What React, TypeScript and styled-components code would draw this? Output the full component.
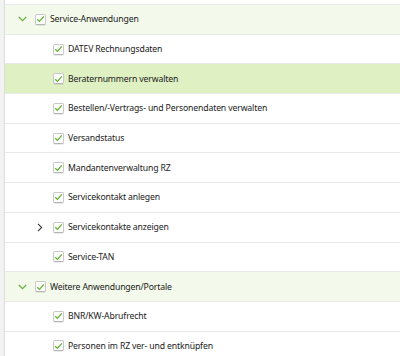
import React from 'react';
import styled, { createGlobalStyle } from 'styled-components';

const GlobalStyle = createGlobalStyle`
    html, body {
        margin: 0;
        padding: 0;
        background: #fff;
    }
    body {
        font-family: "Noto Sans", "Open Sans", sans-serif;
    }
`

type Node = {
    label: string;
    level: number;
    expander?: 'open' | 'closed';
    kind?: 'group' | 'selected';
}

const nodes: Node[] = [
    { label: 'Service-Anwendungen', level: 0, expander: 'open', kind: 'group' },
    { label: 'DATEV Rechnungsdaten', level: 1 },
    { label: 'Beraternummern verwalten', level: 1, kind: 'selected' },
    { label: 'Bestellen/-Vertrags- und Personendaten verwalten', level: 1 },
    { label: 'Versandstatus', level: 1 },
    { label: 'Mandantenverwaltung RZ', level: 1 },
    { label: 'Servicekontakt anlegen', level: 1 },
    { label: 'Servicekontakte anzeigen', level: 1, expander: 'closed' },
    { label: 'Service-TAN', level: 1 },
    { label: 'Weitere Anwendungen/Portale', level: 0, expander: 'open', kind: 'group' },
    { label: 'BNR/KW-Abrufrecht', level: 1 },
    { label: 'Personen im RZ ver- und entknüpfen', level: 1 },
]

const ChevronDown = () => (
    <svg width="9" height="6" viewBox="0 0 9 6">
        <path d="M0.8 1 L4.5 4.6 L8.2 1" fill="none" stroke="#6cb33f" strokeWidth="1.3" />
    </svg>
)

const ChevronRight = () => (
    <svg width="6" height="9" viewBox="0 0 6 9">
        <path d="M1 0.8 L4.6 4.5 L1 8.2" fill="none" stroke="#444" strokeWidth="1.2" />
    </svg>
)

const Tick = () => (
    <svg width="9" height="8" viewBox="0 0 9 8">
        <path d="M1.2 4.2 L3.5 6.4 L7.8 1.4" fill="none" stroke="#5fb32e" strokeWidth="1.3" />
    </svg>
)

const App = () => {
    return (
        <StyledWrapper>
            <GlobalStyle />
            <StyledStrip />
            <StyledTree>
                {
                    nodes.map((n, idx) => (
                        <StyledRow key={ idx } $level={ n.level } $kind={ n.kind }>
                            <StyledExpander>
                                { n.expander === 'open' && <ChevronDown /> }
                                { n.expander === 'closed' && <ChevronRight /> }
                            </StyledExpander>
                            <StyledCheck><Tick /></StyledCheck>
                            <StyledLabel>{ n.label }</StyledLabel>
                        </StyledRow>
                    ))
                }
            </StyledTree>
        </StyledWrapper>
    )
}

const StyledWrapper = styled.div`
    display: flex;
    width: 400px;
    height: 356px;
    overflow: hidden;
    background: #fff;
`

const StyledStrip = styled.div`
    width: 4px;
    flex-shrink: 0;
    background: #f2f2f2;
    border-right: 1px solid #dcdcdc;
`

const StyledTree = styled.div`
    flex: 1;
    padding-top: 4px;
    display: flex;
    flex-direction: column;
`

const StyledRow = styled.div<{ $level: number; $kind?: string }>`
    display: flex;
    align-items: center;
    flex-shrink: 0;
    height: 28.7px;
    padding-left: ${ p => 9 + p.$level * 18 }px;
    border-bottom: 1px solid #e9e9e9;
    background: ${ p => p.$kind === 'group' ? '#f3f9eb' : p.$kind === 'selected' ? '#dff0c3' : '#fff' };
    &:first-child {
        border-top: 1px solid #e9e9e9;
    }
`

const StyledExpander = styled.span`
    width: 16px;
    height: 16px;
    display: flex;
    align-items: center;
    justify-content: center;
    margin-right: 5px;
`

const StyledCheck = styled.span`
    box-sizing: border-box;
    width: 11px;
    height: 11px;
    border: 1px solid #c9c9c9;
    border-bottom-color: #b5b5b5;
    border-radius: 2px;
    background: #fff;
    box-shadow: 0 1px 0 rgba(0, 0, 0, 0.08);
    display: flex;
    align-items: center;
    justify-content: center;
    margin-right: 4px;
`

const StyledLabel = styled.span`
    font-size: 8.7px;
    color: #222;
    white-space: nowrap;
    letter-spacing: -0.15px;
`

export default App
